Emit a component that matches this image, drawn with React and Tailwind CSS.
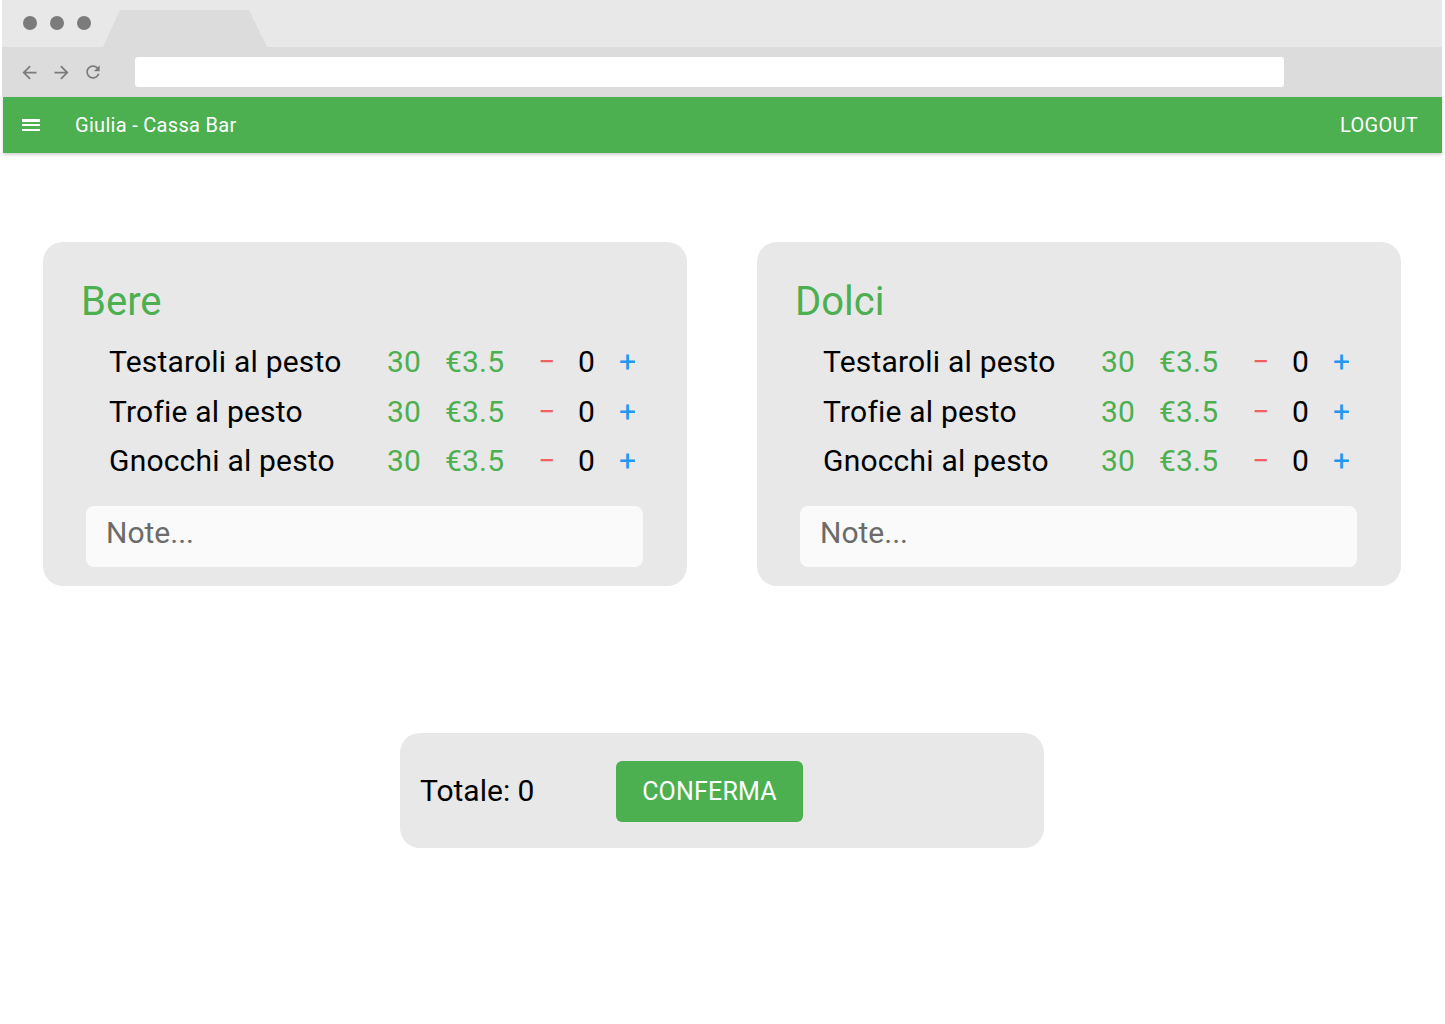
import React from "react";

const font = { fontFamily: "Roboto, 'Noto Sans', sans-serif" };

const items = ["Testaroli al pesto", "Trofie al pesto", "Gnocchi al pesto"];

const MIcon = ({ d, className }) => (
  <svg viewBox="0 0 24 24" className={className} fill="currentColor">
    <path d={d} />
  </svg>
);

const BrowserBar = () => (
  <div className="bg-[#e8e8e8]">
    <div className="relative h-[47px]">
      <div className="flex items-center gap-[13px] pl-[21px] pt-[16px]">
        <span className="block w-[14px] h-[14px] rounded-full bg-[#7b7b7b]" />
        <span className="block w-[14px] h-[14px] rounded-full bg-[#7b7b7b]" />
        <span className="block w-[14px] h-[14px] rounded-full bg-[#7b7b7b]" />
      </div>
      {/* tab */}
      <svg className="absolute left-[101px] top-[10px]" width="166" height="37" viewBox="0 0 166 37">
        <polygon points="0,37 17,0 146,0 164,37" fill="#dcdcdc" />
      </svg>
    </div>
    <div className="h-[50px] bg-[#dcdcdc] flex items-center">
      <div className="flex items-center gap-[11px] pl-[17px] text-[#7b7b7b]">
        <MIcon className="w-[21px] h-[21px]" d="M20 11H7.83l5.59-5.59L12 4l-8 8 8 8 1.41-1.41L7.83 13H20v-2z" />
        <MIcon className="w-[21px] h-[21px]" d="M12 4l-1.41 1.41L16.17 11H4v2h12.17l-5.58 5.59L12 20l8-8z" />
        <MIcon className="w-[20px] h-[20px]" d="M17.65 6.35C16.2 4.9 14.21 4 12 4c-4.42 0-7.99 3.58-7.99 8s3.57 8 7.99 8c3.73 0 6.84-2.55 7.73-6h-2.08c-.82 2.33-3.04 4-5.65 4-3.31 0-6-2.69-6-6s2.69-6 6-6c1.66 0 3.14.69 4.22 1.78L13 11h7V4l-2.35 2.35z" />
      </div>
      <div className="ml-[32px] w-[1149px] h-[30px] bg-white rounded-[3px]" />
    </div>
  </div>
);

const TopBar = () => (
  <div className="ml-px h-[56px] bg-[#4caf50] flex items-center text-white shadow-[0_2px_3px_rgba(0,0,0,0.18)] relative">
    <MIcon className="ml-[16px] w-[24px] h-[24px]" d="M3 18h18v-2H3v2zm0-5h18v-2H3v2zm0-6v2h18V6H3z" />
    <span className="ml-[32px] text-[20px] tracking-[0.3px]">Giulia - Cassa Bar</span>
    <span className="ml-auto mr-[24px] text-[20px] tracking-[0.3px]">LOGOUT</span>
  </div>
);

const Card = ({ title }) => (
  <div className="w-[644px] bg-[#e8e8e8] rounded-[20px] pl-[38px] pr-[44px] pt-[36px] pb-[19px]">
    <h2 className="text-[40px] leading-[48px] text-[#4caf50]">{title}</h2>
    <div className="mt-[11px] pl-[28px]">
      {items.map((name) => (
        <div
          key={name}
          className="grid grid-cols-[278px_58px_93px_40px_41px_auto] items-center h-[49.5px] text-[30px] tracking-[0.2px]"
        >
          <span className="text-black">{name}</span>
          <span className="text-[#4caf50]">30</span>
          <span className="text-[#4caf50]">€3.5</span>
          <span className="text-[#f06262]">−</span>
          <span className="text-black">0</span>
          <span className="text-[#2196f3]">+</span>
        </div>
      ))}
    </div>
    <input
      placeholder="Note..."
      className="mt-[20px] ml-[5px] w-[557px] h-[61px] rounded-[8px] bg-[#fafafa] pl-[20px] pb-[7px] text-[30px] outline-none placeholder:text-[#6b6b6b]"
    />
  </div>
);

export default function App() {
  return (
    <div className="min-h-[1024px] bg-white" style={font}>
      <div className="ml-[2px] w-[1440px]">
        <BrowserBar />
        <TopBar />
        <div className="flex justify-center gap-[70px] pt-[89px]">
          <Card title="Bere" />
          <Card title="Dolci" />
        </div>
        <div className="flex justify-center pt-[147px]">
          <div className="w-[644px] h-[115px] bg-[#e8e8e8] rounded-[20px] flex items-center pl-[20px]">
            <span className="w-[196px] text-[30px] text-black">Totale: 0</span>
            <button className="w-[187px] h-[61px] mt-[3px] rounded-[6px] bg-[#4caf50] text-white text-[25px] tracking-[0.2px]">
              CONFERMA
            </button>
          </div>
        </div>
      </div>
    </div>
  );
}
